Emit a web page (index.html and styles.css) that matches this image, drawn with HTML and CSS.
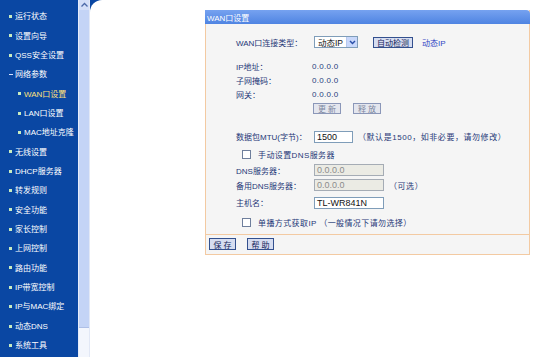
FILE: index.html
```html
<!DOCTYPE html>
<html lang="zh-CN">
<head>
  <meta charset="UTF-8" />
  <title>WAN口设置</title>
  <link rel="stylesheet" href="styles.css">
</head>
<body>
  <div class="layout">
    <nav class="menu">
      <ul>
        <li class="item">运行状态</li>
        <li class="item">设置向导</li>
        <li class="item">QSS安全设置</li>
        <li class="item open">网络参数</li>
        <li class="sub active">WAN口设置</li>
        <li class="sub">LAN口设置</li>
        <li class="sub">MAC地址克隆</li>
        <li class="item">无线设置</li>
        <li class="item">DHCP服务器</li>
        <li class="item">转发规则</li>
        <li class="item">安全功能</li>
        <li class="item">家长控制</li>
        <li class="item">上网控制</li>
        <li class="item">路由功能</li>
        <li class="item">IP带宽控制</li>
        <li class="item">IP与MAC绑定</li>
        <li class="item">动态DNS</li>
        <li class="item">系统工具</li>
      </ul>
    </nav>
    <div class="scrollbar">
      <div class="scroll-up">
        <svg width="9" height="6" viewBox="0 0 9 6"><path d="M1.5 4.5 L4.5 1.5 L7.5 4.5" fill="none" stroke="#4d6aa8" stroke-width="1.3"/></svg>
      </div>
      <div class="scroll-thumb"></div>
    </div>
    <div class="frame">
      <main class="content">
        <form class="panel">
          <div class="panel-title">WAN口设置</div>
          <div class="panel-body">
            <div class="row r-wan">
              <span class="label">WAN口连接类型：</span>
              <span class="select">动态IP<span class="select-arrow"><svg width="7" height="5" viewBox="0 0 7 5"><path d="M1 1 L3.5 3.6 L6 1" fill="none" stroke="#2a4fa8" stroke-width="1.4"/></svg></span></span>
              <span class="btn detect">自动检测</span>
              <span class="link">动态IP</span>
            </div>
            <div class="row r-info first">
              <span class="label">IP地址：</span><span class="value">0.0.0.0</span>
            </div>
            <div class="row r-info">
              <span class="label">子网掩码：</span><span class="value">0.0.0.0</span>
            </div>
            <div class="row r-info">
              <span class="label">网关：</span><span class="value">0.0.0.0</span>
            </div>
            <div class="row r-actions">
              <span class="btn off renew">更 新</span>
              <span class="btn off">释 放</span>
            </div>
            <div class="row r-mtu">
              <span class="label">数据包MTU(字节)：</span>
              <span class="input mtu">1500</span>
              <span class="note">（默认是1500，如非必要，请勿修改）</span>
            </div>
            <div class="row r-check">
              <span class="checkbox"></span><span class="check-text">手动设置DNS服务器</span>
            </div>
            <div class="row r-dns">
              <span class="label">DNS服务器：</span>
              <span class="input wide disabled">0.0.0.0</span>
            </div>
            <div class="row r-dns">
              <span class="label">备用DNS服务器：</span>
              <span class="input wide disabled">0.0.0.0</span>
              <span class="note">（可选）</span>
            </div>
            <div class="row r-host">
              <span class="label">主机名：</span>
              <span class="input wide">TL-WR841N</span>
            </div>
            <div class="row r-check last">
              <span class="checkbox"></span><span class="check-text">单播方式获取IP （一般情况下请勿选择）</span>
            </div>
          </div>
          <div class="panel-foot">
            <span class="btn foot">保 存</span>
            <span class="btn foot">帮 助</span>
          </div>
        </form>
      </main>
    </div>
  </div>
</body>
</html>
```

FILE: styles.css
```css
* { box-sizing: border-box; }

html, body {
  margin: 0;
  height: 100%;
  overflow: hidden;
}

body {
  font-family: "Liberation Sans", "Noto Sans CJK SC", sans-serif;
  font-size: 8px;
  background: #fff;
}

.layout {
  display: flex;
  height: 357px;
}

/* left menu */
.menu {
  width: 78px;
  background: #0a47a3;
  color: #fff;
}

.menu ul {
  list-style: none;
  margin: 0;
  padding: 6px 0 0;
}

.menu li {
  height: 19.35px;
  display: flex;
  align-items: center;
  position: relative;
  white-space: nowrap;
}

.menu .item { padding-left: 15px; }
.menu .sub { padding-left: 24px; }

.menu li::before {
  content: "";
  position: absolute;
  top: 9px;
  width: 3px;
  height: 3px;
  background: #c8ecc0;
}

.menu .item::before { left: 9px; }
.menu .sub::before { left: 18px; }

.menu .open::before {
  width: 4px;
  height: 1px;
  top: 10px;
  background: #d8e4ff;
}

.menu .active { color: #ffe07a; }

/* fake frame scrollbar */
.scrollbar {
  width: 12px;
  display: flex;
  flex-direction: column;
  background: #f3f6fd;
  border-left: 1px solid #e6ecfa;
  border-right: 1px solid #e2e8f6;
}

.scroll-up {
  height: 10px;
  display: flex;
  align-items: center;
  justify-content: center;
  background: #d4dff8;
}

.scroll-thumb {
  height: 318px;
  background: #c4d4f6;
  border-bottom: 1px solid #aebfe6;
}

/* right frame */
.frame {
  flex: 1;
  background: #0a47a3;
}

.content {
  height: 100%;
  background: #fff;
  border-top-left-radius: 12px;
  padding: 10px 0 0 115px;
}

.panel {
  width: 325px;
  margin: 0;
  border: 1px solid #f3caa2;
  border-top: none;
  background: #f5f5f5;
  color: #1f3777;
}

.panel-title {
  height: 14px;
  margin: 0 -1px;
  padding-left: 2px;
  display: flex;
  align-items: center;
  color: #fff;
  background: linear-gradient(#76a2f0, #4f84e2);
  border-top-right-radius: 4px;
}

.panel-body {
  padding: 10px 0 3px 30px;
  border-bottom: 1px solid #f3caa2;
}

.row {
  display: flex;
  align-items: center;
  white-space: nowrap;
}

.label { width: 76px; }

.r-wan { height: 16px; }
.r-info { height: 14.3px; }
.r-info.first { margin-top: 9px; }
.r-actions { height: 13px; padding-left: 77px; }
.r-mtu { height: 16px; margin-top: 14px; }
.r-check { height: 16px; margin-top: 2px; padding-left: 6px; }
.r-check.last { margin-top: 4px; }
.r-dns { height: 15px; }
.r-host { height: 16px; margin-top: 2px; }

.value { color: #27407c; letter-spacing: 0.3px; }

.select {
  margin-left: 2px;
  width: 44px;
  height: 12px;
  display: flex;
  align-items: center;
  justify-content: space-between;
  padding-left: 3px;
  background: #fff;
  border: 1px solid #7f9db9;
  color: #111;
  font-size: 8.5px;
}

.select-arrow {
  width: 11px;
  height: 10px;
  display: flex;
  align-items: center;
  justify-content: center;
  background: #c9d8fb;
  border-left: 1px solid #b6c8ef;
}

.btn {
  display: inline-flex;
  align-items: center;
  justify-content: center;
  height: 11px;
  padding: 0 3px;
  border: 1px solid #33508e;
  background: #d6ddf0;
  color: #14245a;
}

.detect { margin-left: 15px; width: 40px; }

.link {
  margin-left: 9px;
  color: #3247c4;
}

.btn.off {
  width: 28px;
  border-color: #8b97b8;
  background: #e4e6ee;
  color: #7c86a0;
}

.renew { margin-right: 12px; }

.input {
  display: inline-flex;
  align-items: center;
  margin-left: 2px;
  height: 12px;
  padding-left: 2px;
  background: #fff;
  border: 1px solid #7f9db9;
  color: #111;
  font-size: 9px;
}

.mtu { width: 39px; }
.wide { width: 70px; }

.input.disabled {
  background: #ebebe4;
  border-color: #a5acb5;
  color: #8c8c8c;
}

.note { margin-left: 5px; letter-spacing: 0.55px; }

.checkbox {
  width: 9px;
  height: 9px;
  border: 1px solid #6f7f9c;
  background: #fff;
}

.check-text { margin-left: 7px; letter-spacing: 0.4px; }

.panel-foot {
  height: 19px;
  display: flex;
  align-items: center;
  gap: 11px;
  padding-left: 3px;
}

.btn.foot {
  width: 27px;
  height: 12px;
}
```
